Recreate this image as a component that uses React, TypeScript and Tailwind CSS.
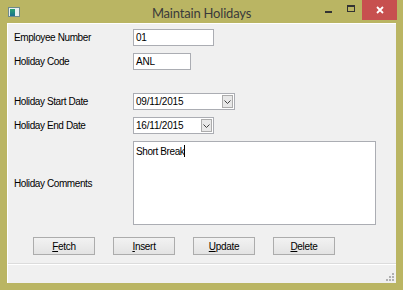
import { ReactNode } from "react";

const ui = { fontFamily: '"Liberation Sans", Arial, sans-serif' };

const Label = ({ children }: { children: ReactNode }) => (
  <div className="w-[125px] shrink-0 pl-[6px] text-[10px] tracking-[-0.4px] text-black">{children}</div>
);

const TextBox = ({ value, width }: { value: string; width: string }) => (
  <div className={`${width} flex h-[17px] items-center border border-[#abadb3] bg-white pl-[2px] text-[10px] tracking-[-0.2px] text-black`}>
    {value}
  </div>
);

const DateBox = ({ value, width }: { value: string; width: string }) => (
  <div className={`${width} flex h-[17px] items-center border border-[#abadb3] bg-white text-[10px] tracking-[-0.2px] text-black`}>
    <span className="flex-1 pl-[2px]">{value}</span>
    <div className="mr-px flex h-[13px] w-[11px] items-center justify-center border border-[#acacac] bg-[#e8e8e8]">
      <svg width="7" height="4" viewBox="0 0 7 4">
        <path d="M0.5 0.5 L3.5 3.5 L6.5 0.5" fill="none" stroke="#404040" strokeWidth="1" />
      </svg>
    </div>
  </div>
);

const Btn = ({ k, rest }: { k: string; rest: string }) => (
  <div className="flex h-[18px] w-[62px] items-center justify-center border border-[#acacac] bg-gradient-to-b from-[#f2f2f2] to-[#e3e3e3] text-[10px] tracking-[-0.3px] text-black">
    <span className="underline">{k}</span>
    {rest}
  </div>
);

export default function App() {
  return (
    <div className="flex h-[290px] w-[403px] flex-col bg-[#bab563]" style={ui}>
      {/* title bar */}
      <div className="relative flex h-[23px] items-start">
        <div className="ml-[8px] mt-[7px] flex h-[10px] w-[12px] items-center border border-[#6f8a8a] bg-[#e8efef]">
          <div className="ml-px h-[7px] w-[5px] bg-gradient-to-b from-[#2aa36b] to-[#1d6e8f]" />
        </div>
        <div
          className="absolute left-0 right-0 top-[4px] text-center text-[13px] leading-[18px] tracking-[-0.2px] text-[#3a3a3a]"
          style={{ fontFamily: 'Lato, "Open Sans", sans-serif' }}
        >
          Maintain Holidays
        </div>
        <div className="ml-auto flex items-start">
          <div className="mr-[15px] mt-[11px] h-[2px] w-[7px] bg-[#333]" />
          <div className="mr-[7px] mt-[5px] h-[7px] w-[8px] border border-t-2 border-[#333]" />
          <div className="flex h-[20px] w-[35px] items-center justify-center bg-[#c7504f]">
            <svg width="8" height="8" viewBox="0 0 8 8">
              <path d="M1 1 L7 7 M7 1 L1 7" stroke="#fff" strokeWidth="1.8" />
            </svg>
          </div>
          <div className="w-[6px]" />
        </div>
      </div>

      {/* client */}
      <div className="mx-[7px] flex h-[260px] flex-col border-l border-t border-white bg-[#f0f0f0]">
        <div className="mt-[5px] flex items-center">
          <Label>Employee Number</Label>
          <TextBox value="01" width="w-[81px]" />
        </div>
        <div className="mt-[7px] flex items-center">
          <Label>Holiday Code</Label>
          <TextBox value="ANL" width="w-[58px]" />
        </div>
        <div className="mt-[23px] flex items-center">
          <Label>Holiday Start Date</Label>
          <DateBox value="09/11/2015" width="w-[102px]" />
        </div>
        <div className="mt-[7px] flex items-center">
          <Label>Holiday End Date</Label>
          <DateBox value="16/11/2015" width="w-[81px]" />
        </div>
        <div className="mt-[7px] flex items-center">
          <Label>Holiday Comments</Label>
          <div className="h-[84px] w-[243px] border border-[#abadb3] bg-white pl-[2px] pt-px text-[10px] leading-[13px] tracking-[-0.4px] text-black">
            Short Break<span className="inline-block h-[12px] w-px translate-y-[2px] bg-black" />
          </div>
        </div>
        <div className="mt-[12px] flex gap-[18px] pl-[25px]">
          <Btn k="F" rest="etch" />
          <Btn k="I" rest="nsert" />
          <Btn k="U" rest="pdate" />
          <Btn k="D" rest="elete" />
        </div>
        <div className="mt-[8px] flex flex-1 flex-col border-t border-[#dcdcdc]">
          <div className="h-px bg-white" />
          <div className="mt-auto mb-[2px] mr-[2px] self-end">
            <svg width="9" height="9" viewBox="0 0 9 9">
              <g fill="#b0b0b0">
                <rect x="7" y="1" width="2" height="2" />
                <rect x="4" y="4" width="2" height="2" />
                <rect x="7" y="4" width="2" height="2" />
                <rect x="1" y="7" width="2" height="2" />
                <rect x="4" y="7" width="2" height="2" />
                <rect x="7" y="7" width="2" height="2" />
              </g>
            </svg>
          </div>
        </div>
      </div>
    </div>
  );
}
